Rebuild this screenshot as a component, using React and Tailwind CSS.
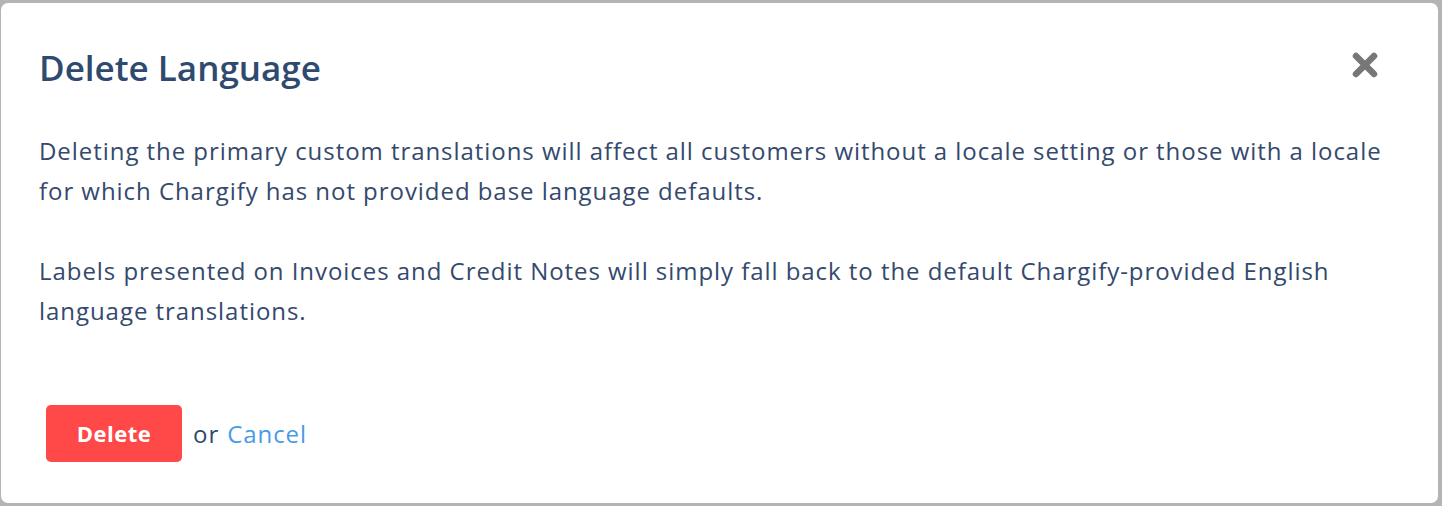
export default function App() {
    return (
        <div className="w-[1442px] h-[506px] bg-[#b4b4b4] pt-[3px] pl-[1px] pr-[4px] pb-[3px]" style={{ fontFamily: "'Open Sans', Lato, sans-serif" }}>
            <div className="h-full bg-white rounded-[7px] flex flex-col px-[38px]">

                {/* Header */}
                <div className="flex items-center justify-between pt-[43px]">
                    <h2 className="text-[35px] leading-[44px] font-semibold text-[#2f4a6f]">
                        Delete Language
                    </h2>
                    <button className="mr-[22px] -mt-[6px] text-[#777777]">
                        <svg width="26" height="26" viewBox="0 0 26 26">
                            <path d="M4 4 L22 22 M22 4 L4 22" stroke="currentColor" strokeWidth="6.5" strokeLinecap="round" />
                        </svg>
                    </button>
                </div>

                {/* Body */}
                <div className="mt-[41px] text-[24px] leading-[40px] text-[#34496d] tracking-[0.95px] space-y-[40px] whitespace-nowrap">
                    <p>
                        Deleting the primary custom translations will affect all customers without a locale setting or those with a locale<br />
                        for which Chargify has not provided base language defaults.
                    </p>
                    <p>
                        Labels presented on Invoices and Credit Notes will simply fall back to the default Chargify-provided English<br />
                        language translations.
                    </p>
                </div>

                {/* Actions */}
                <div className="mt-[74px] flex items-center gap-[11px] pl-[7px] text-[24px] tracking-[0.95px]">
                    <button className="w-[136px] h-[57px] rounded-[5px] bg-[#ff4848] text-white font-bold text-[22px] tracking-[0.5px]">
                        Delete
                    </button>
                    <span className="text-[#2f4a6f]">or</span>
                    <a href="#" className="text-[#4a9ae6] -ml-[3px]">Cancel</a>
                </div>

            </div>
        </div>
    )
}
